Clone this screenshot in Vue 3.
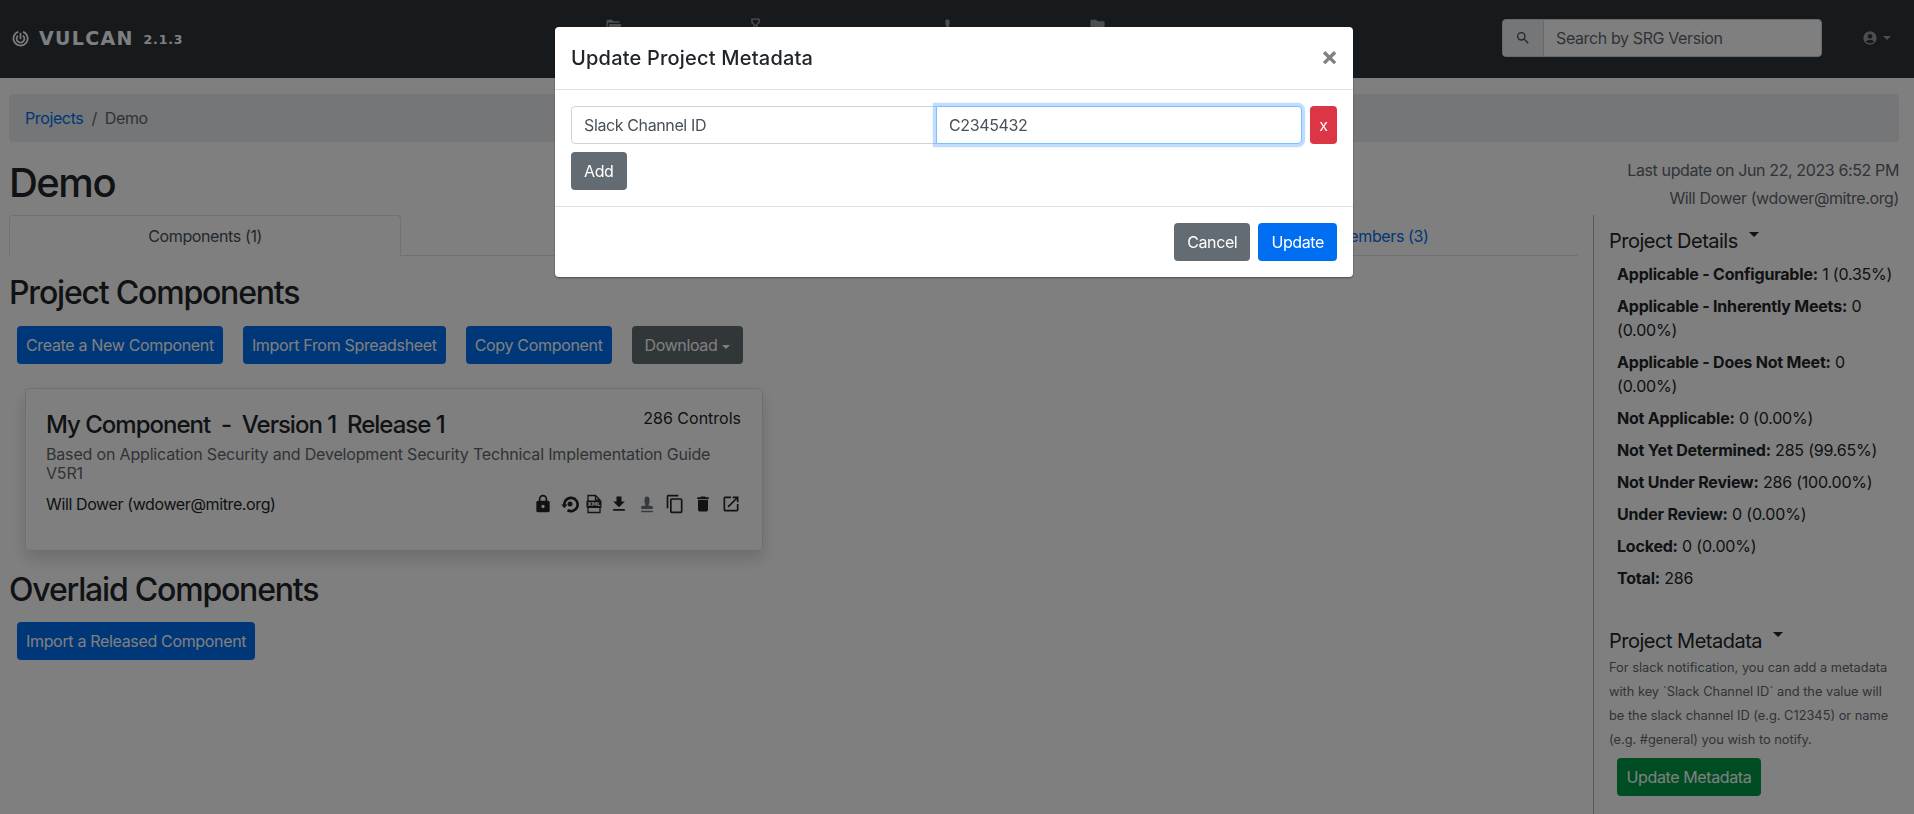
<script setup>
const stampPath = 'M5 22H19V20H5V22M19 16C19 14.9 18.1 14 17 14H14C13.7 12.4 15 11 15 9.5V6C15 4.3 13.7 3 12 3S9 4.3 9 6V9.5C9 11 10.3 12.4 10 14H7C5.9 14 5 14.9 5 16V18H19V16Z'
const navItems = [
  { key: 'projects', d: 'M19,20H4C2.89,20 2,19.1 2,18V6C2,4.89 2.89,4 4,4H10L12,6H19A2,2 0 0,1 21,8H21L4,8V18L6.14,10H23.21L20.93,18.5C20.7,19.37 19.92,20 19,20Z' },
  { key: 'released', d: 'M6,2V8L10,12L6,16V22H18V16L14,12L18,8V2H6M16,16.5V20H8V16.5L12,12.5L16,16.5M12,11.5L8,7.5V4H16V7.5L12,11.5Z' },
  { key: 'srgs', d: stampPath },
  { key: 'users', d: 'M10,4H4C2.89,4 2,4.89 2,6V18A2,2 0 0,0 4,20H20A2,2 0 0,0 22,18V8C22,6.89 21.1,6 20,6H12L10,4Z' },
]
const tabs = [
  { key: 'components', label: 'Components (1)', active: true },
  { key: 'diff', label: '', active: false },
  { key: 'history', label: '', active: false },
  { key: 'members', label: 'Members (3)', active: false },
]
const actions = ['Create a New Component', 'Import From Spreadsheet', 'Copy Component']
const cardIcons = [
  { name: 'lock', gap: 0, d: 'M12,17A2,2 0 0,0 14,15C14,13.89 13.1,13 12,13A2,2 0 0,0 10,15A2,2 0 0,0 12,17M18,8A2,2 0 0,1 20,10V20A2,2 0 0,1 18,22H6A2,2 0 0,1 4,20V10C4,8.89 4.9,8 6,8H7V6A5,5 0 0,1 12,1A5,5 0 0,1 17,6V8H18M12,3A3,3 0 0,0 9,6V8H15V6A3,3 0 0,0 12,3Z' },
  { name: 'restore', gap: 7 },
  { name: 'xml', gap: 4 },
  { name: 'download', gap: 5.5, d: 'M5,20H19V18H5M19,9H15V3H9V9H5L12,16L19,9Z' },
  { name: 'stamp', gap: 8, d: stampPath, muted: true },
  { name: 'copy', gap: 7.5, d: 'M19,21H8V7H19M19,5H8A2,2 0 0,0 6,7V21A2,2 0 0,0 8,23H19A2,2 0 0,0 21,21V7A2,2 0 0,0 19,5M16,1H4A2,2 0 0,0 2,3V17H4V3H16V1Z' },
  { name: 'delete', gap: 8, d: 'M19,4H15.5L14.5,3H9.5L8.5,4H5V6H19M6,19A2,2 0 0,0 8,21H16A2,2 0 0,0 18,19V7H6V19Z' },
  { name: 'open', gap: 8.5, d: 'M14,3V5H17.59L7.76,14.83L9.17,16.24L19,6.41V10H21V3M19,19H5V5H12V3H5C3.89,3 3,3.9 3,5V19A2,2 0 0,0 5,21H19A2,2 0 0,0 21,19V12H19V19Z' },
]
const details = [
  ['Applicable - Configurable:', '1 (0.35%)'],
  ['Applicable - Inherently Meets:', '0 (0.00%)'],
  ['Applicable - Does Not Meet:', '0 (0.00%)'],
  ['Not Applicable:', '0 (0.00%)'],
  ['Not Yet Determined:', '285 (99.65%)'],
  ['Not Under Review:', '286 (100.00%)'],
  ['Under Review:', '0 (0.00%)'],
  ['Locked:', '0 (0.00%)'],
  ['Total:', '286'],
]
</script>

<template>
  <div class="page">
    <header class="navbar">
      <div class="brand">
        <svg class="logo" viewBox="0 0 24 24" fill="none" stroke="currentColor" stroke-width="2.4">
          <path d="M15.500 2.600A10 10 0 1 1 9 2.500" />
          <path d="M15.500 8A5.500 5.500 0 1 1 8.500 8" />
          <path d="M12 4v9" />
        </svg>
        <span class="brand-name">VULCAN</span>
        <span class="brand-version">2.1.3</span>
      </div>
      <nav class="nav">
        <a v-for="item in navItems" :key="item.key" class="nav-link">
          <svg class="nav-icon" viewBox="0 0 24 24"><path :d="item.d" fill="currentColor" /></svg>
        </a>
      </nav>
      <div class="search">
        <span class="search-addon">
          <svg viewBox="0 0 24 24" class="search-icon"><path fill="currentColor" d="M9.5,3A6.5,6.5 0 0,1 16,9.5C16,11.11 15.41,12.59 14.44,13.73L14.71,14H15.5L20.5,19L19,20.5L14,15.5V14.71L13.73,14.44C12.59,15.41 11.11,16 9.5,16A6.5,6.5 0 0,1 3,9.5A6.5,6.5 0 0,1 9.5,3M9.5,5C7,5 5,7 5,9.5C5,12 7,14 9.5,14C12,14 14,12 14,9.5C14,7 12,5 9.5,5Z" /></svg>
        </span>
        <input class="search-input" placeholder="Search by SRG Version" />
      </div>
      <div class="user">
        <svg viewBox="0 0 24 24" class="user-icon"><path fill="currentColor" d="M12,2A10,10 0 0,0 2,12A10,10 0 0,0 12,22A10,10 0 0,0 22,12A10,10 0 0,0 12,2M12,6A3.5,3.5 0 0,1 15.5,9.5A3.5,3.5 0 0,1 12,13A3.5,3.5 0 0,1 8.5,9.5A3.5,3.5 0 0,1 12,6M12,20C9.5,20 7.2,19 5.6,17.3C6.6,15.7 9.3,14.9 12,14.9C14.7,14.9 17.4,15.7 18.4,17.3C16.8,19 14.5,20 12,20Z" /></svg>
        <span class="caret user-caret"></span>
      </div>
    </header>

    <div class="container">
      <div class="breadcrumb">
        <a class="link">Projects</a>
        <span class="crumb-sep">/</span>
        <span class="crumb-current">Demo</span>
      </div>

      <div class="title-row">
        <h1>Demo</h1>
        <div class="updated">
          <div>Last update on Jun 22, 2023 6:52 PM</div>
          <div>Will Dower (wdower@mitre.org)</div>
        </div>
      </div>

      <div class="columns">
        <main class="main">
          <div class="tabs">
            <a v-for="tab in tabs" :key="tab.key" class="tab" :class="{ active: tab.active }">{{ tab.label }}</a>
          </div>

          <h2 class="first-heading">Project Components</h2>
          <div class="actions first-actions">
            <button v-for="a in actions" :key="a" class="btn primary">{{ a }}</button>
            <button class="btn secondary">Download<span class="caret"></span></button>
          </div>

          <section class="card">
            <div class="card-top">
              <div class="card-title">My Component&nbsp; - &nbsp;Version 1&nbsp; Release 1</div>
              <div class="controls">286 Controls</div>
            </div>
            <div class="subtitle">Based on Application Security and Development Security Technical Implementation Guide V5R1</div>
            <div class="card-bottom">
              <span>Will Dower (wdower@mitre.org)</span>
              <div class="card-icons">
                <span v-for="icon in cardIcons" :key="icon.name" class="card-icon" :class="{ muted: icon.muted }" :style="{ marginLeft: icon.gap + 'px' }">
                  <svg v-if="icon.name === 'xml'" viewBox="0 0 20 20">
                    <path d="M4 7V1.500h7.500l4.500 4.500v1M4 14v4.500h12V14" fill="none" stroke="currentColor" stroke-width="1.300" />
                    <path d="M11.500 1.500V6H16" fill="none" stroke="currentColor" stroke-width="1.300" />
                    <rect x="2.500" y="6.500" width="15" height="7.500" rx="1" fill="currentColor" />
                    <text x="10" y="12.200" text-anchor="middle" class="xml-text">XML</text>
                  </svg>
                  <svg v-else-if="icon.name === 'restore'" viewBox="0 0 24 24">
                    <path d="M5.200 13.500A8 8 0 1 1 9 19.400" fill="none" stroke="currentColor" stroke-width="3.200" />
                    <path d="M1.500 12.500H9L5.200 17Z" fill="currentColor" />
                    <circle cx="12" cy="12" r="3" fill="currentColor" />
                  </svg>
                  <svg v-else viewBox="0 0 24 24"><path :d="icon.d" fill="currentColor" /></svg>
                </span>
              </div>
            </div>
          </section>

          <h2 class="second-heading">Overlaid Components</h2>
          <div class="actions second-actions">
            <button class="btn primary">Import a Released Component</button>
          </div>
        </main>

        <aside class="sidebar">
          <h3 class="side-title">Project Details<span class="side-caret"></span></h3>
          <div class="details">
            <p v-for="row in details" :key="row[0]"><strong>{{ row[0] }}</strong> {{ row[1] }}</p>
          </div>
          <h3 class="side-title metadata-title">Project Metadata<span class="side-caret"></span></h3>
          <p class="hint">For slack notification, you can add a metadata with key `Slack Channel ID` and the value will be the slack channel ID (e.g. C12345) or name (e.g. #general) you wish to notify.</p>
          <button class="btn success">Update Metadata</button>
        </aside>
      </div>
    </div>

    <div class="backdrop"></div>
    <div class="modal-wrap">
      <div class="modal">
        <div class="modal-header">
          <h5>Update Project Metadata</h5>
          <span class="close">×</span>
        </div>
        <div class="modal-body">
          <div class="meta-row">
            <div class="meta-inputs">
              <input class="field key" value="Slack Channel ID" />
              <input class="field focus" value="C2345432" />
            </div>
            <button class="btn danger">x</button>
          </div>
          <button class="btn modal-secondary add">Add</button>
        </div>
        <div class="modal-footer">
          <button class="btn modal-secondary">Cancel</button>
          <button class="btn modal-primary">Update</button>
        </div>
      </div>
    </div>
  </div>
</template>

<style>
html, body { margin: 0; padding: 0; background: #fff; overflow: hidden; }
</style>

<style scoped>
* { box-sizing: border-box; }
.page {
  position: relative;
  height: 814px;
  overflow: hidden;
  font-family: Inter, "Liberation Sans", sans-serif;
  font-size: 16px;
  line-height: 24px;
  letter-spacing: -0.38px;
  color: #212529;
  background: #fff;
}
.navbar {
  display: flex;
  height: 78px;
  align-items: center;
  padding-left: 12px;
  background: #2e353b;
  color: #fff;
}
.brand { display: flex; width: 571px; margin-top: -2px; align-items: center; flex: none; }
.logo { width: 17px; height: 17px; margin-right: 10px; }
.brand-name {
  font-family: "DejaVu Sans", sans-serif;
  font-size: 19px;
  font-weight: 700;
  letter-spacing: 1.3px;
}
.brand-version {
  margin: 3px 0 0 10px;
  font-family: "DejaVu Sans", sans-serif;
  font-size: 12.500px;
  font-weight: 700;
  letter-spacing: 0.8px;
}
.nav {
  display: grid;
  grid-template-columns: 60px 160px 160px 76px;
  gap: 32px;
  align-self: flex-start;
  margin-top: 17px;
  flex: none;
}
.nav-link {
  display: flex;
  justify-content: center;
  color: rgba(255, 255, 255, 0.5);
}
.nav-icon { width: 17px; height: 17px; }
.search {
  display: flex;
  width: 320px;
  height: 38px;
  margin: -3px 0 0 auto;
  border: 1px solid #ced4da;
  border-radius: 4px;
  overflow: hidden;
  background: #fff;
}
.search-addon {
  display: flex;
  width: 41px;
  align-items: center;
  justify-content: center;
  background: #e9ecef;
  border-right: 1px solid #ced4da;
  color: #495057;
}
.search-icon { width: 16px; height: 16px; }
.search-input {
  flex: 1;
  min-width: 0;
  padding: 0 12px;
  border: 0;
  outline: 0;
  font: inherit;
  letter-spacing: inherit;
  background: transparent;
}
.search-input::placeholder { color: #5f676e; opacity: 1; }
.user {
  display: flex;
  width: 92px;
  margin-top: -3px;
  padding-left: 40px;
  align-items: center;
  color: rgba(255, 255, 255, 0.5);
}
.user-icon { width: 16px; height: 16px; }
.user-caret { color: rgba(255, 255, 255, 0.5); margin-left: 4px; }
.caret {
  display: inline-block;
  margin-left: 5px;
  vertical-align: 3px;
  border-top: 4.500px solid;
  border-right: 4.500px solid transparent;
  border-left: 4.500px solid transparent;
}
.container { padding: 16px 15px 0 9px; }
.breadcrumb {
  display: flex;
  height: 48px;
  align-items: center;
  padding: 0 16px;
  margin-bottom: 17px;
  background: #e9ecef;
  border-radius: 4px;
}
.link { color: #006ef0; }
.crumb-sep { padding: 0 8px; color: #5f676e; }
.crumb-current { color: #5f676e; }
.title-row { display: flex; justify-content: space-between; }
h1 {
  margin: 0 0 8px;
  font-size: 40px;
  font-weight: 500;
  line-height: 48px;
  letter-spacing: -1.5px;
}
.updated {
  margin-top: -3px;
  line-height: 28px;
  text-align: right;
  color: #5f676e;
}
.columns { display: flex; align-items: stretch; height: 600px; }
.main { width: 1569px; flex: none; }
.tabs {
  display: grid;
  grid-template-columns: repeat(4, 1fr);
  height: 41px;
  border-bottom: 1px solid #dee2e6;
}
.tab {
  height: 41px;
  padding-top: 8px;
  text-align: center;
  color: #006ef0;
  border: 1px solid transparent;
  border-radius: 4px 4px 0 0;
}
.tab.active {
  color: #495057;
  background: #fff;
  border-color: #dee2e6 #dee2e6 #fff;
}
h2 {
  margin: 0;
  font-size: 32px;
  font-weight: 500;
  line-height: 38px;
  letter-spacing: -1.2px;
}
.first-heading { margin-top: 18px; }
.second-heading { margin-top: 20px; }
.actions { display: flex; gap: 20px; margin-left: 8px; }
.first-actions { margin-top: 14px; }
.second-actions { margin-top: 13px; }
.btn {
  height: 38px;
  padding: 0 12px;
  border: 1px solid transparent;
  border-radius: 4px;
  font: inherit;
  letter-spacing: inherit;
  color: #fff;
  white-space: nowrap;
}
.btn .caret { vertical-align: 2px; }
.primary { background: #006ef0; padding: 0 8px; letter-spacing: -0.33px; }
.secondary { background: #626c72; }
.success { display: block; margin-left: 8px; background: #009a49; width: 144px; padding: 0; }
.danger { width: 27px; padding: 0; background: #dc3545; }
.card {
  width: 738px;
  height: 163px;
  margin: 24px 0 0 16px;
  padding: 16px 21px 16px 20px;
  border: 1px solid rgba(0, 0, 0, 0.125);
  border-radius: 4px;
  box-shadow: 0 8px 16px rgba(0, 0, 0, 0.15);
}
.card-top { display: flex; justify-content: space-between; }
.card-title { margin-top: 1px; font-size: 24px; font-weight: 500; line-height: 38px; letter-spacing: -1px; }
.controls { line-height: 26px; letter-spacing: 0; }
.subtitle { line-height: 19px; margin-top: 1px; color: #5f676e; letter-spacing: -0.17px; }
.card-bottom { display: flex; justify-content: space-between; align-items: center; margin-top: 9px; }
.card-icons { display: flex; }
.card-icon { display: block; width: 20px; height: 20px; flex: none; }
.card-icon svg { display: block; width: 20px; height: 20px; }
.card-icon.muted { color: #6c757d; }
.xml-text { font-family: "DejaVu Sans", sans-serif; font-size: 5.500px; font-weight: 700; letter-spacing: 0; fill: #fff; }
.sidebar {
  width: 306px;
  margin-left: 15px;
  padding: 14px 0 0 15px;
  border-left: 1px solid #adb5bd;
  flex: none;
}
.side-title {
  margin: 0;
  font-size: 20px;
  font-weight: 400;
  line-height: 24px;
  letter-spacing: -0.5px;
}
.side-caret {
  display: inline-block;
  margin-left: 11px;
  vertical-align: 11px;
  border-top: 5px solid;
  border-right: 5px solid transparent;
  border-left: 5px solid transparent;
}
.details { margin: 9px 0 0 8px; letter-spacing: -0.2px; }
.details p { margin: 0 0 8px; }
.details strong { font-weight: 700; letter-spacing: -0.2px; }
.metadata-title { margin-top: 39px; }
.hint {
  margin: 3px 0 6px;
  font-size: 12.800px;
  line-height: 24px;
  letter-spacing: 0;
  color: #5f676e;
}
.backdrop {
  position: fixed;
  inset: 0;
  background: rgba(0, 0, 0, 0.5);
}
.modal-wrap {
  position: fixed;
  top: 27px;
  left: 555px;
}
.modal {
  width: 798px;
  height: 250px;
  background: #fff;
  border-radius: 4px;
  box-shadow: 0 1px 2px rgba(0, 0, 0, 0.4);
}
.modal-header {
  display: flex;
  height: 63px;
  justify-content: space-between;
  align-items: center;
  padding: 0 15px 0 16px;
  border-bottom: 1px solid #dee2e6;
}
h5 { margin: 0; font-size: 20px; font-weight: 500; line-height: 30px; letter-spacing: 0.2px; }
.close { margin-top: -3px; font-size: 26px; font-weight: 700; color: #808080; line-height: 30px; }
.modal-body { height: 117px; padding: 16px; border-bottom: 1px solid #dee2e6; }
.meta-row { display: flex; gap: 8px; }
.meta-inputs { display: flex; flex: 1; min-width: 0; }
.field {
  flex: 1;
  width: 50%;
  min-width: 0;
  height: 38px;
  padding: 0 12px;
  border: 1px solid #ced4da;
  color: #495057;
  font: inherit;
  letter-spacing: inherit;
  outline: 0;
}
.field.key { border-radius: 4px 0 0 4px; margin-right: -1px; }
.field.focus {
  position: relative;
  border-color: #80bdff;
  border-radius: 0 4px 4px 0;
  box-shadow: 0 0 0 3.200px rgba(0, 123, 255, 0.25);
}
.add { display: block; margin-top: 8px; }
.modal-secondary { background: #626c72; }
.modal-primary { background: #006ef0; }
.modal-footer { display: flex; justify-content: flex-end; gap: 8px; padding: 16px; }
</style>
